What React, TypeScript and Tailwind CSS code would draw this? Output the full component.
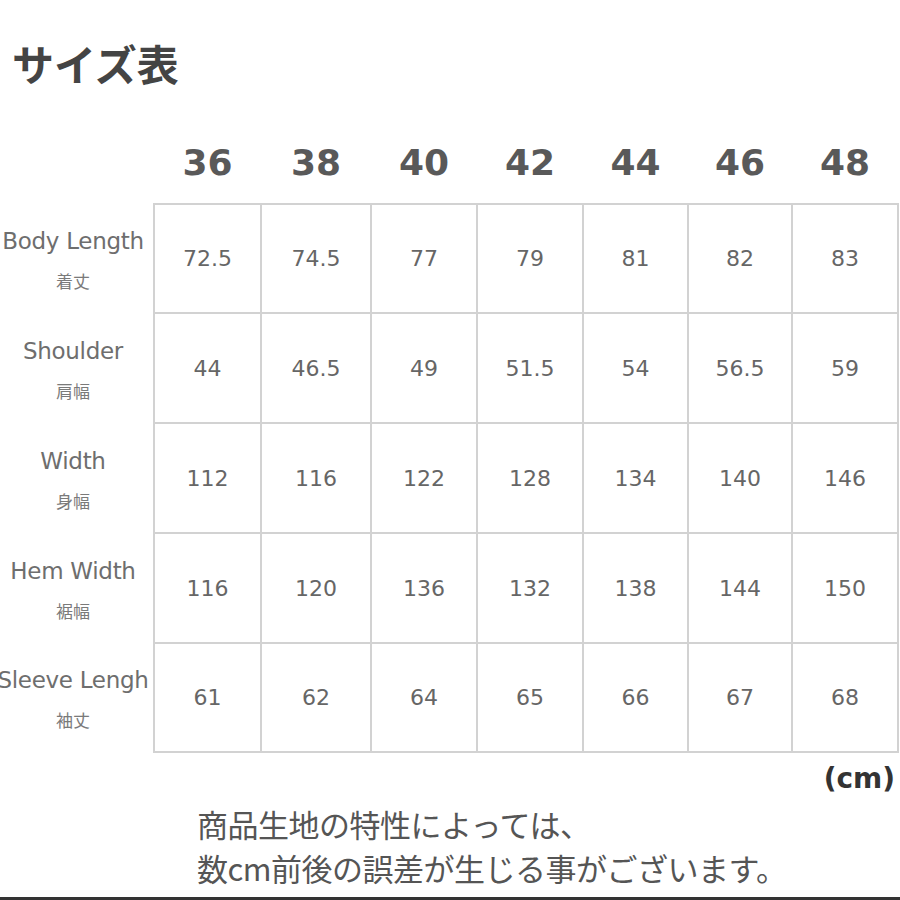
const SIZES = ['36', '38', '40', '42', '44', '46', '48'];

const ROWS = [
  { label: 'Body Length', jp: '着丈', values: ['72.5', '74.5', '77', '79', '81', '82', '83'] },
  { label: 'Shoulder', jp: '肩幅', values: ['44', '46.5', '49', '51.5', '54', '56.5', '59'] },
  { label: 'Width', jp: '身幅', values: ['112', '116', '122', '128', '134', '140', '146'] },
  { label: 'Hem Width', jp: '裾幅', values: ['116', '120', '136', '132', '138', '144', '150'] },
  { label: 'Sleeve Lengh', jp: '袖丈', values: ['61', '62', '64', '65', '66', '67', '68'] },
];

const COLS = 'grid-cols-[105px_108px_104px_104px_103px_102px_104px]';

export default function App() {
  return (
    <div className="w-[900px] h-[900px] bg-white overflow-hidden flex flex-col font-['DejaVu_Sans',sans-serif]">
      {/* Title */}
      <div className="h-[126px] flex items-center pl-[12px]">
        <h1 className="font-['Noto_Sans_CJK_JP',sans-serif] font-bold text-[42px] leading-none text-[#444]">
          サイズ表
        </h1>
      </div>

      {/* Size header */}
      <div className="h-[77px] flex">
        <div className="w-[153px] shrink-0" />
        <div className={`grid ${COLS} gap-[2px] px-[2px] pb-[4px] items-center`}>
          {SIZES.map((s) => (
            <div key={s} className="text-center font-bold text-[36px] leading-none text-[#595959]">
              {s}
            </div>
          ))}
        </div>
      </div>

      {/* Table */}
      <div className="flex">
        <div className="w-[153px] shrink-0 flex flex-col pt-[2px] gap-[2px]">
          {ROWS.map((r, i) => (
            <div
              key={r.label}
              className={`${i === 0 || i === 4 ? 'h-[107px]' : 'h-[108px]'} flex flex-col items-center justify-center pr-[7px] pt-[2px] gap-[15px]`}
            >
              <span className="whitespace-nowrap text-[23px] leading-[28px] tracking-[-0.3px] text-[#6e6e6e]">
                {r.label}
              </span>
              <span className="whitespace-nowrap font-['Noto_Sans_CJK_JP',sans-serif] text-[17px] leading-[22px] text-[#7a7a7a]">
                {r.jp}
              </span>
            </div>
          ))}
        </div>
        <div
          className={`grid ${COLS} grid-rows-[107px_108px_108px_108px_107px] gap-[2px] p-[2px] bg-[#d2d2d2]`}
        >
          {ROWS.map((r) =>
            r.values.map((v, j) => (
              <div
                key={r.label + j}
                className="bg-white flex items-center justify-center text-[22px] text-[#666]"
              >
                {v}
              </div>
            ))
          )}
        </div>
      </div>

      {/* Unit */}
      <div className="h-[52px] flex items-center justify-end pr-[5px]">
        <span className="font-bold text-[28px] leading-none text-[#333]">(cm)</span>
      </div>

      {/* Note */}
      <div className="pl-[197px] -mt-[3px] font-['Noto_Sans_CJK_JP',sans-serif] text-[31px] leading-[44px] text-[#555] tracking-[-0.5px]">
        <p>商品生地の特性によっては、</p>
        <p>数cm前後の誤差が生じる事がございます。</p>
      </div>

      <div className="flex-1" />
      <div className="h-[3px] bg-[#333] shrink-0" />
    </div>
  );
}
